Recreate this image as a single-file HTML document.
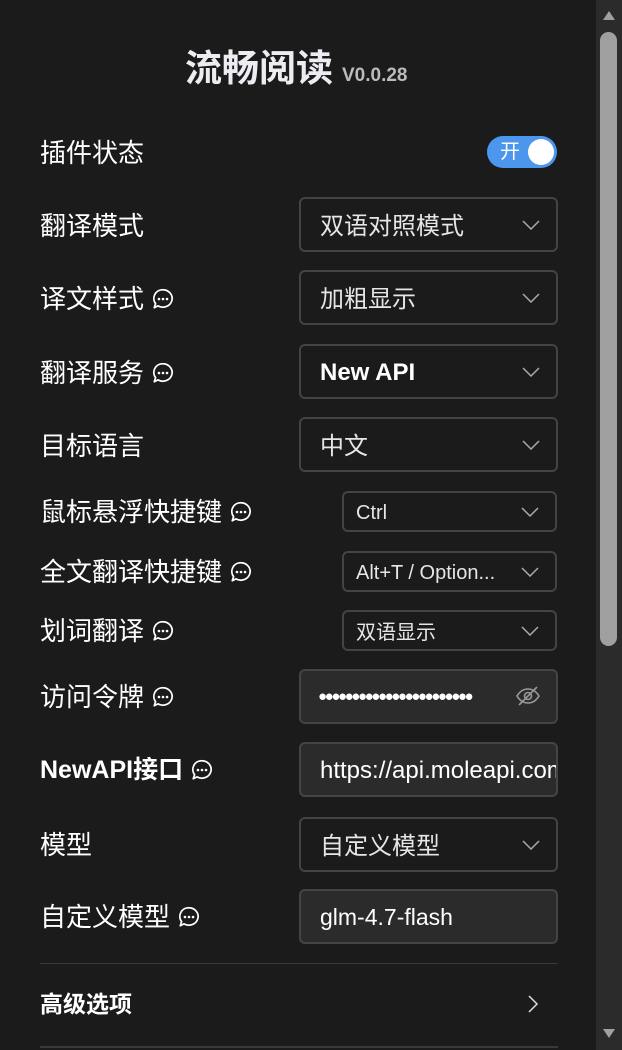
<!DOCTYPE html>
<html><head><meta charset="utf-8"><style>
*{margin:0;padding:0;box-sizing:border-box}
body{width:622px;height:1050px;background:#1b1b1b;position:relative;overflow:hidden;font-family:"Liberation Sans","Noto Sans CJK SC",sans-serif;color:#fff}
.a{position:absolute}
.lbl{position:absolute;left:40px;font-size:26px;line-height:30px;height:30px;color:#fff;display:flex;align-items:center;white-space:nowrap}
.lbl svg{margin-left:7px}
.sel{position:absolute;left:299px;width:259px;height:55px;border:2px solid #444;border-radius:6px;font-size:24px;color:#e6e6e6;padding-left:19px;display:flex;align-items:center;line-height:1}
.cj{padding-top:4px}
.sm{left:342px;width:215px;height:41px;font-size:20px;padding-left:12px}
.inp{background:#2b2b2b;color:#fff;overflow:hidden;white-space:nowrap}
.chev{position:absolute;right:16px;top:50%;margin-top:-5px}
</style></head><body>
<div class="a" style="left:596px;top:0;width:26px;height:1050px;background:#2b2b2b"></div>
<div class="a" style="left:600px;top:32px;width:17px;height:614px;background:#9f9f9f;border-radius:9px"></div>
<div class="a" style="left:603px;top:11px;width:0;height:0;border-left:6px solid transparent;border-right:6px solid transparent;border-bottom:9px solid #a0a0a0"></div>
<div class="a" style="left:603px;top:1029px;width:0;height:0;border-left:6px solid transparent;border-right:6px solid transparent;border-top:9px solid #a0a0a0"></div>

<div class="a" style="left:185px;top:45px;font-size:37px;font-weight:bold;color:#ececf2;white-space:nowrap;line-height:48px">流畅阅读<span style="font-size:19px;color:#bbb;margin-left:9px">V0.0.28</span></div>

<svg width="0" height="0" style="position:absolute"><defs><symbol id="b" viewBox="0 0 22 22"><path d="M11 2.5a8.5 8 0 1 1-4.6 14.8L3 19l1.2-3.7A8 8 0 0 1 11 2.5z" fill="none" stroke="#fff" stroke-width="1.6" stroke-linejoin="round"/><circle cx="7.3" cy="11" r="1.2" fill="#fff"/><circle cx="11" cy="11" r="1.2" fill="#fff"/><circle cx="14.7" cy="11" r="1.2" fill="#fff"/></symbol>
<symbol id="c" viewBox="0 0 18 10"><path d="M1 1l8 8 8-8" fill="none" stroke="#aaa" stroke-width="1.5"/></symbol></defs></svg>

<div class="lbl" style="top:138px">插件状态</div>
<div class="a" style="left:487px;top:136px;width:70px;height:32px;background:#4d96ee;border-radius:16px"><span class="a" style="left:13px;top:4px;font-size:20px;line-height:24px;color:#fff">开</span><div class="a" style="left:41px;top:3px;width:26px;height:26px;background:#fff;border-radius:50%"></div></div>

<div class="lbl" style="top:211px">翻译模式</div>
<div class="sel cj" style="top:197px">双语对照模式<svg class="chev" width="18" height="10"><use href="#c"/></svg></div>

<div class="lbl" style="top:284px">译文样式<svg width="24" height="24"><use href="#b"/></svg></div>
<div class="sel cj" style="top:270px">加粗显示<svg class="chev" width="18" height="10"><use href="#c"/></svg></div>

<div class="lbl" style="top:358px">翻译服务<svg width="24" height="24"><use href="#b"/></svg></div>
<div class="sel" style="top:344px;font-weight:bold;color:#fff;padding-top:2px">New API<svg class="chev" width="18" height="10"><use href="#c"/></svg></div>

<div class="lbl" style="top:431px">目标语言</div>
<div class="sel cj" style="top:417px">中文<svg class="chev" width="18" height="10"><use href="#c"/></svg></div>

<div class="lbl" style="top:497px">鼠标悬浮快捷键<svg width="24" height="24"><use href="#b"/></svg></div>
<div class="sel sm" style="top:491px;padding-top:2px">Ctrl<svg class="chev" width="18" height="10"><use href="#c"/></svg></div>

<div class="lbl" style="top:557px">全文翻译快捷键<svg width="24" height="24"><use href="#b"/></svg></div>
<div class="sel sm" style="top:551px;padding-top:2px">Alt+T / Option...<svg class="chev" width="18" height="10"><use href="#c"/></svg></div>

<div class="lbl" style="top:616px">划词翻译<svg width="24" height="24"><use href="#b"/></svg></div>
<div class="sel sm cj" style="top:610px">双语显示<svg class="chev" width="18" height="10"><use href="#c"/></svg></div>

<div class="lbl" style="top:682px">访问令牌<svg width="24" height="24"><use href="#b"/></svg></div>
<div class="sel inp" style="top:669px;font-size:15px;letter-spacing:-2.4px;padding-left:17px">●●●●●●●●●●●●●●●●●●●●●●●
<svg class="a" style="left:214px;top:14px" width="26" height="22" viewBox="0 0 26 22"><path d="M2 11c3-5 7-7 11-7s8 2 11 7c-3 5-7 7-11 7s-8-2-11-7z" fill="none" stroke="#999" stroke-width="1.6"/><circle cx="13" cy="11" r="3.5" fill="none" stroke="#999" stroke-width="1.6"/><path d="M4 20L22 2" stroke="#999" stroke-width="1.6"/></svg></div>

<div class="lbl" style="top:755px;font-weight:bold;font-size:25px">NewAPI接口<svg width="24" height="24"><use href="#b"/></svg></div>
<div class="sel inp" style="top:742px;font-size:24px;padding-top:2px">https://api.moleapi.com</div>

<div class="lbl" style="top:830px">模型</div>
<div class="sel cj" style="top:817px">自定义模型<svg class="chev" width="18" height="10"><use href="#c"/></svg></div>

<div class="lbl" style="top:902px">自定义模型<svg width="24" height="24"><use href="#b"/></svg></div>
<div class="sel inp" style="top:889px;font-size:23px;padding-top:2px">glm-4.7-flash</div>

<div class="a" style="left:40px;top:963px;width:518px;height:1px;background:#3a3a3a"></div>
<div class="lbl" style="top:989px;font-size:23px;font-weight:bold">高级选项</div>
<svg class="a" style="left:527px;top:994px" width="12" height="20" viewBox="0 0 12 20"><path d="M2 2l8 8-8 8" fill="none" stroke="#ddd" stroke-width="1.5"/></svg>
<div class="a" style="left:40px;top:1046px;width:518px;height:2px;background:#3a3a3a"></div>
</body></html>
